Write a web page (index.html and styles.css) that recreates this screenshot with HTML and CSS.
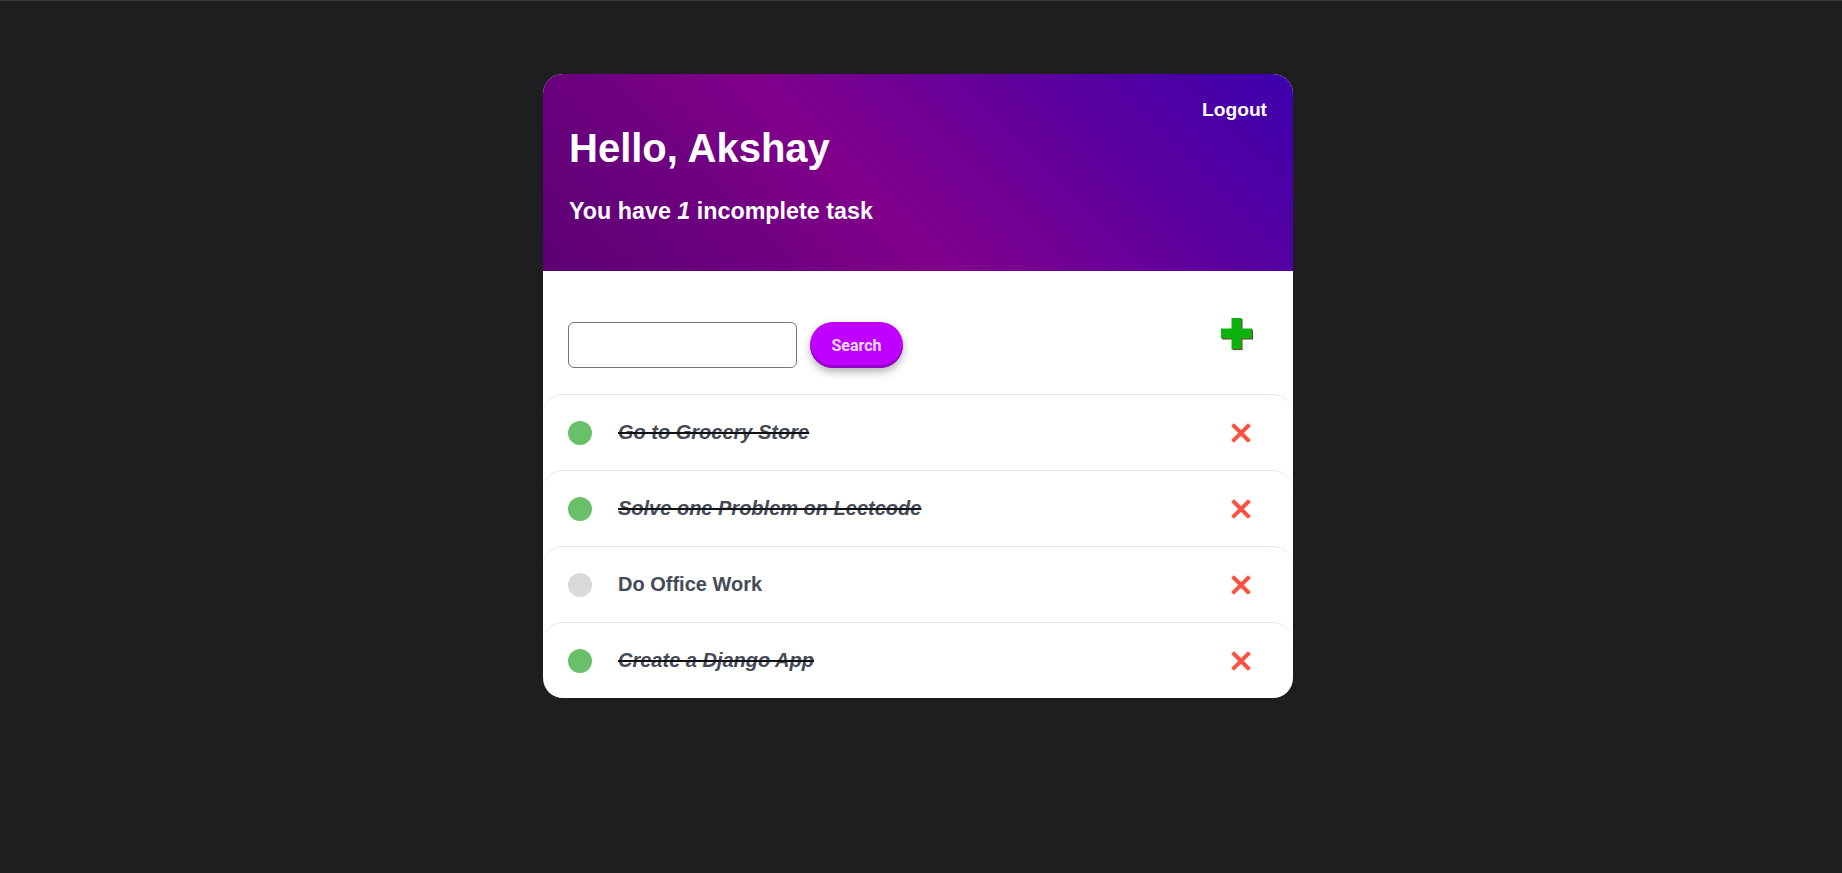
FILE: index.html
```html
<!DOCTYPE html>
<html lang="en">
<head>
<meta charset="utf-8">
<title>Todo</title>
<link rel="stylesheet" href="styles.css">
</head>
<body>
<div class="page">
  <div class="card">
    <header class="header">
      <a class="logout" href="#">Logout</a>
      <h1 class="hello">Hello, Akshay</h1>
      <p class="summary">You have <i>1</i> incomplete task</p>
    </header>
    <div class="toolbar">
      <form class="search">
        <input class="search-input" type="text">
        <button class="search-btn" type="button">Search</button>
      </form>
      <a class="add" href="#" aria-label="Add task">
        <svg width="34" height="34" viewBox="0 0 34 34">
          <path d="M11.5 1h10v10.5H32v10H21.5V32h-10V21.5H1v-10h10.5z" fill="#7a3a26" transform="translate(1 1)"/>
          <path d="M11.5 1h10v10.5H32v10H21.5V32h-10V21.5H1v-10h10.5z" fill="#0db30d"/>
        </svg>
      </a>
    </div>
    <ul class="tasks">
      <li class="task">
        <span class="dot done"></span>
        <span class="title done">Go to Grocery Store</span>
        <a class="del" href="#" aria-label="Delete"><svg width="20" height="20" viewBox="0 0 20 20"><path d="M3 3L17 17M17 3L3 17" stroke="#ff5140" stroke-width="4" stroke-linecap="square"/></svg></a>
      </li>
      <li class="task">
        <span class="dot done"></span>
        <span class="title done">Solve one Problem on Leetcode</span>
        <a class="del" href="#" aria-label="Delete"><svg width="20" height="20" viewBox="0 0 20 20"><path d="M3 3L17 17M17 3L3 17" stroke="#ff5140" stroke-width="4" stroke-linecap="square"/></svg></a>
      </li>
      <li class="task">
        <span class="dot"></span>
        <span class="title">Do Office Work</span>
        <a class="del" href="#" aria-label="Delete"><svg width="20" height="20" viewBox="0 0 20 20"><path d="M3 3L17 17M17 3L3 17" stroke="#ff5140" stroke-width="4" stroke-linecap="square"/></svg></a>
      </li>
      <li class="task">
        <span class="dot done"></span>
        <span class="title done">Create a Django App</span>
        <a class="del" href="#" aria-label="Delete"><svg width="20" height="20" viewBox="0 0 20 20"><path d="M3 3L17 17M17 3L3 17" stroke="#ff5140" stroke-width="4" stroke-linecap="square"/></svg></a>
      </li>
    </ul>
  </div>
</div>
</body>
</html>
```
FILE: styles.css
```css
* { box-sizing: border-box; }

html, body {
  margin: 0;
  padding: 0;
}

body {
  background: #1e1e20;
  font-family: "Liberation Sans", Arial, sans-serif;
  min-height: 100vh;
  border-top: 1px solid #3b3b3e;
}

.page {
  padding: 73px 6px 0 0;
}

.card {
  width: 750px;
  margin: 0 auto;
  background: #ffffff;
  border-radius: 20px;
  overflow: hidden;
}

.header {
  height: 197px;
  padding: 25px 26px 0 26px;
  display: flex;
  flex-direction: column;
  background: linear-gradient(45deg, #5c0072 0%, #6e0080 25%, #81008a 42%, #66009a 65%, #3c00ad 100%);
  color: #ffffff;
}

.logout {
  align-self: flex-end;
  color: #ffffff;
  text-decoration: none;
  font-weight: 700;
  font-size: 19.2px;
}

.hello {
  margin: 5px 0 0 0;
  font-size: 40px;
  font-weight: 700;
  line-height: normal;
}

.summary {
  margin: 27px 0 0 0;
  font-size: 23.3px;
  font-weight: 700;
  line-height: normal;
}

.summary i {
  font-style: italic;
}

.toolbar {
  height: 123px;
  padding: 51px 39px 0 25px;
  display: flex;
  justify-content: space-between;
  align-items: flex-start;
}

.search {
  display: flex;
  gap: 13px;
  margin: 0;
}

.search-input {
  width: 229px;
  height: 46px;
  border: 1px solid #767676;
  border-radius: 6px;
  padding: 0 10px;
  font-size: 16px;
  background: #fff;
}

.search-btn {
  width: 93px;
  height: 46px;
  border: none;
  border-radius: 23px;
  background: #bf00ff;
  color: #f4dcff;
  font-family: Roboto, "Liberation Sans", sans-serif;
  font-weight: 700;
  font-size: 16px;
  box-shadow: inset 0 -3px 0 #9600c8, 0 4px 8px rgba(0, 0, 0, 0.3);
  cursor: pointer;
}

.add {
  display: block;
  margin-top: -5px;
  width: 34px;
  height: 34px;
}

.add svg { display: block; }

.tasks {
  list-style: none;
  margin: 0;
  padding: 0;
}

.task {
  height: 76px;
  display: flex;
  align-items: center;
  padding: 0 42px 0 25px;
  border-top: 1px solid #e3e5ec;
  border-radius: 20px 20px 0 0;
}

.dot {
  width: 24px;
  height: 24px;
  border-radius: 50%;
  background: #d9d9d9;
  flex: none;
}

.dot.done {
  background: #6abf69;
}

.title {
  margin-left: 26px;
  flex: 1;
  font-size: 20px;
  font-weight: 700;
  color: #454b57;
}

.title.done {
  font-style: italic;
  text-decoration: line-through;
  text-decoration-color: #111;
  text-decoration-thickness: 2px;
}

.del {
  display: block;
  width: 20px;
  height: 20px;
}

.del svg { display: block; }
```
